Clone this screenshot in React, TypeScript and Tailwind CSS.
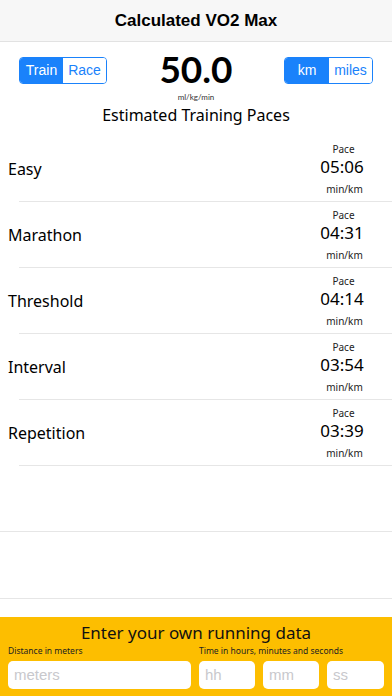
const paces = [
  { name: 'Easy', time: '05:06' },
  { name: 'Marathon', time: '04:31' },
  { name: 'Threshold', time: '04:14' },
  { name: 'Interval', time: '03:54' },
  { name: 'Repetition', time: '03:39' },
]

const helv = { fontFamily: '"Liberation Sans", Arial, sans-serif' }

function Segmented({ left, right, leftW, rightW }: { left: string; right: string; leftW: string; rightW: string }) {
  return (
    <div className="flex h-[27px] overflow-hidden rounded-[4px] border border-[#1a82fb] text-[14px]" style={helv}>
      <div className={`flex items-center justify-center bg-[#1a82fb] text-white ${leftW}`}>{left}</div>
      <div className={`flex items-center justify-center bg-white text-[#1a82fb] ${rightW}`}>{right}</div>
    </div>
  )
}

export default function App() {
  return (
    <div className="flex h-[696px] w-[392px] flex-col bg-white text-black" style={{ fontFamily: '"Noto Sans", "Open Sans", sans-serif' }}>
      <header className="flex h-[42px] items-center justify-center border-b border-[#e2e2e2] bg-[#f7f7f7]">
        <h1 className="text-[17px] font-bold" style={helv}>Calculated VO2 Max</h1>
      </header>

      <section className="relative h-[94px]">
        <div className="flex items-start justify-between px-[19px] pt-[15px]">
          <Segmented left="Train" right="Race" leftW="w-[43px]" rightW="w-[43px]" />
          <Segmented left="km" right="miles" leftW="w-[44px]" rightW="w-[43px]" />
        </div>
        <div className="absolute left-0 right-0 top-[9px] flex flex-col items-center">
          <div className="text-[37px] font-bold leading-[36px]" style={{ fontFamily: 'Lato, "Liberation Sans", sans-serif' }}>50.0</div>
          <div className="mt-[5px] text-[8px] leading-[10px] text-[#333]" style={{ fontFamily: 'Lato, sans-serif' }}>ml/kg/min</div>
          <div className="mt-[2px] text-[16px] leading-[22px]">Estimated Training Paces</div>
        </div>
      </section>

      <ul>
        {paces.map((p) => (
          <li key={p.name} className="relative flex h-[66px] items-center justify-between pl-[8px] pr-[28px]">
            <span className="text-[16px]">{p.name}</span>
            <div className="flex w-[44px] flex-col items-center">
              <span className="ml-[3px] text-[10px] leading-[14px] text-[#222]">Pace</span>
              <span className="text-[17px] leading-[22px]">{p.time}</span>
              <span className="ml-[5px] mt-[4px] text-[10px] leading-[14px] text-[#222]">min/km</span>
            </div>
            <div className="absolute bottom-0 left-[19px] right-0 h-px bg-[#e6e6e6]" />
          </li>
        ))}
      </ul>

      <div className="h-[66px] border-b border-[#e6e6e6]" />
      <div className="h-[67px] border-b border-[#e6e6e6]" />
      <div className="flex-1" />

      <footer className="flex h-[79px] flex-col bg-[#fdbe00] px-[8px] pt-[4px]">
        <div className="text-center text-[17px] leading-[24px] text-[#111]">Enter your own running data</div>
        <div className="flex text-[8.5px] leading-[12px] text-[#222]">
          <span className="w-[191px]">Distance in meters</span>
          <span>Time in hours, minutes and seconds</span>
        </div>
        <div className="mt-[4px] flex gap-[8px] text-[15px] text-[#c8c8cc]" style={helv}>
          <div className="flex h-[28px] w-[183px] items-center rounded-[5px] bg-white px-[6px]">meters</div>
          <div className="flex h-[28px] w-[56px] items-center rounded-[5px] bg-white px-[6px]">hh</div>
          <div className="flex h-[28px] w-[56px] items-center rounded-[5px] bg-white px-[6px]">mm</div>
          <div className="flex h-[28px] w-[57px] items-center rounded-[5px] bg-white px-[6px]">ss</div>
        </div>
      </footer>
    </div>
  )
}
